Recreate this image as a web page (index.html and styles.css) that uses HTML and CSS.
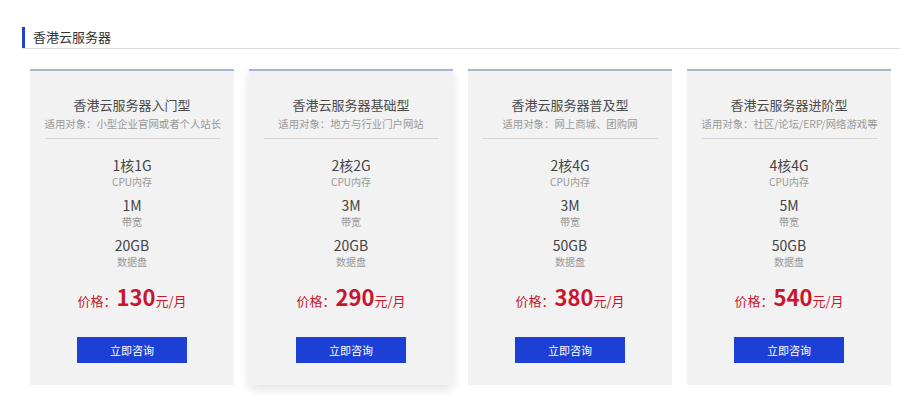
FILE: index.html
```html
<!DOCTYPE html>
<html lang="zh-CN">
<head>
<meta charset="utf-8">
<title>香港云服务器</title>
<link rel="stylesheet" href="styles.css">
</head>
<body>
<div class="page">
  <div class="section-head">
    <span class="bar"></span>
    <h2 class="section-title">香港云服务器</h2>
  </div>
  <div class="cards">
    <div class="card">
      <div class="card-title">香港云服务器入门型</div>
      <div class="card-sub">适用对象：小型企业官网或者个人站长</div>
      <div class="specs">
        <div class="spec"><div class="spec-val">1核1G</div><div class="spec-lbl">CPU内存</div></div>
        <div class="spec"><div class="spec-val">1M</div><div class="spec-lbl">带宽</div></div>
        <div class="spec"><div class="spec-val">20GB</div><div class="spec-lbl">数据盘</div></div>
      </div>
      <div class="price">价格：<span class="num">130</span>元/月</div>
      <a class="btn">立即咨询</a>
    </div>
    <div class="card active">
      <div class="card-title">香港云服务器基础型</div>
      <div class="card-sub">适用对象：地方与行业门户网站</div>
      <div class="specs">
        <div class="spec"><div class="spec-val">2核2G</div><div class="spec-lbl">CPU内存</div></div>
        <div class="spec"><div class="spec-val">3M</div><div class="spec-lbl">带宽</div></div>
        <div class="spec"><div class="spec-val">20GB</div><div class="spec-lbl">数据盘</div></div>
      </div>
      <div class="price">价格：<span class="num">290</span>元/月</div>
      <a class="btn">立即咨询</a>
    </div>
    <div class="card">
      <div class="card-title">香港云服务器普及型</div>
      <div class="card-sub">适用对象：网上商城、团购网</div>
      <div class="specs">
        <div class="spec"><div class="spec-val">2核4G</div><div class="spec-lbl">CPU内存</div></div>
        <div class="spec"><div class="spec-val">3M</div><div class="spec-lbl">带宽</div></div>
        <div class="spec"><div class="spec-val">50GB</div><div class="spec-lbl">数据盘</div></div>
      </div>
      <div class="price">价格：<span class="num">380</span>元/月</div>
      <a class="btn">立即咨询</a>
    </div>
    <div class="card">
      <div class="card-title">香港云服务器进阶型</div>
      <div class="card-sub">适用对象：社区/论坛/ERP/网络游戏等</div>
      <div class="specs">
        <div class="spec"><div class="spec-val">4核4G</div><div class="spec-lbl">CPU内存</div></div>
        <div class="spec"><div class="spec-val">5M</div><div class="spec-lbl">带宽</div></div>
        <div class="spec"><div class="spec-val">50GB</div><div class="spec-lbl">数据盘</div></div>
      </div>
      <div class="price">价格：<span class="num">540</span>元/月</div>
      <a class="btn">立即咨询</a>
    </div>
  </div>
</div>
</body>
</html>
```
FILE: styles.css
```css
* { box-sizing: border-box; }
html, body { margin: 0; padding: 0; background: #fff; }
body {
  font-family: "Noto Sans CJK SC", "Noto Sans", sans-serif;
  color: #444;
}
.page {
  width: 916px;
  height: 400px;
  padding: 27px 16px 0 22px;
}
.section-head {
  display: flex;
  align-items: center;
  gap: 8px;
  height: 21px;
  border-bottom: 1px solid #dcdcdc;
  box-sizing: content-box;
}
.bar {
  width: 3px;
  height: 21px;
  background: #2342c8;
}
.section-title {
  margin: 0;
  font-size: 13px;
  font-weight: 400;
  color: #333;
  line-height: 20px;
  margin-top: -2px;
}
.cards {
  display: flex;
  gap: 15px;
  margin-top: 20px;
  padding-left: 8px;
}
.card {
  width: 204px;
  height: 316px;
  background: #f2f2f2;
  border-top: 2px solid #a9b5cb;
  display: flex;
  flex-direction: column;
  align-items: center;
  padding-top: 25px;
}
.card.active {
  box-shadow: 0 4px 10px rgba(0,0,0,0.12);
}
.card-title {
  font-size: 13px;
  line-height: 18px;
  color: #4a4a4a;
}
.card-sub {
  font-size: 10.4px;
  line-height: 15px;
  color: #999;
  margin-top: 2px;
  width: 175px;
  text-align: center;
  padding-bottom: 7px;
  border-bottom: 1px solid #d6d6d6;
  white-space: nowrap;
}
.specs {
  margin-top: 16px;
  display: flex;
  flex-direction: column;
  gap: 6px;
  align-items: center;
}
.spec { text-align: center; }
.spec-val {
  font-size: 14px;
  line-height: 20px;
  color: #444;
}
.spec-lbl {
  font-size: 10px;
  line-height: 14px;
  color: #999;
}
.price {
  margin-top: 14px;
  color: #c8162e;
  font-size: 13px;
  line-height: 26px;
  display: flex;
  align-items: baseline;
}
.price .num {
  font-size: 22px;
  font-weight: 700;
  line-height: 26px;
}
.btn {
  margin-top: 23px;
  width: 110px;
  height: 26px;
  background: #1c40d6;
  color: #fff;
  font-size: 11px;
  line-height: 26px;
  text-align: center;
  display: block;
  cursor: pointer;
}
```
